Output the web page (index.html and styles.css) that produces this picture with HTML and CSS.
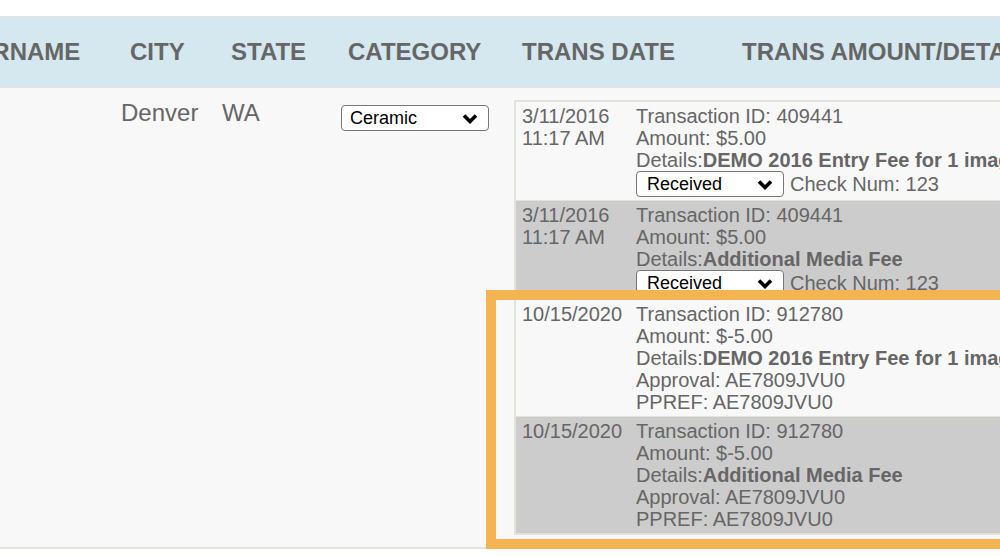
FILE: index.html
```html
<!DOCTYPE html>
<html lang="en">
<head>
  <meta charset="UTF-8">
  <meta name="viewport" content="width=device-width, initial-scale=1.0">
  <title>Entrants</title>
  <link rel="stylesheet" href="styles.css">
</head>
<body>
  <div class="grid">
    <div class="head">
      <div class="h-name">SURNAME</div>
      <div class="h-city">CITY</div>
      <div class="h-state">STATE</div>
      <div class="h-cat">CATEGORY</div>
      <div class="h-date">TRANS DATE</div>
      <div class="h-amount">TRANS AMOUNT/DETAILS</div>
    </div>

    <div class="row">
      <div class="c-name"></div>
      <div class="c-city">Denver</div>
      <div class="c-state">WA</div>
      <div class="c-cat">
        <span class="pick">
          <select>
            <option>Ceramic</option>
          </select>
          <svg class="chev" width="16" height="11" viewBox="0 0 16 11"><polyline points="2,2.5 8,8.5 14,2.5" fill="none" stroke="#000" stroke-width="3.6"/></svg>
        </span>
      </div>
      <div class="c-trans">
        <div class="trans">

          <div class="tr">
            <div class="t-date">3/11/2016<br>11:17 AM</div>
            <div class="t-info">
              Transaction ID: 409441<br>
              Amount: $5.00<br>
              Details:<b>DEMO 2016 Entry Fee for 1 image</b>
              <div class="status">
                <span class="pick small">
                  <select>
                    <option>Received</option>
                  </select>
                  <svg class="chev" width="16" height="11" viewBox="0 0 16 11"><polyline points="2,2.5 8,8.5 14,2.5" fill="none" stroke="#000" stroke-width="3.6"/></svg>
                </span>
                <span class="check">Check Num: 123</span>
              </div>
            </div>
          </div>

          <div class="tr alt">
            <div class="t-date">3/11/2016<br>11:17 AM</div>
            <div class="t-info">
              Transaction ID: 409441<br>
              Amount: $5.00<br>
              Details:<b>Additional Media Fee</b>
              <div class="status">
                <span class="pick small">
                  <select>
                    <option>Received</option>
                  </select>
                  <svg class="chev" width="16" height="11" viewBox="0 0 16 11"><polyline points="2,2.5 8,8.5 14,2.5" fill="none" stroke="#000" stroke-width="3.6"/></svg>
                </span>
                <span class="check">Check Num: 123</span>
              </div>
            </div>
          </div>

          <div class="tr">
            <div class="t-date">10/15/2020</div>
            <div class="t-info">
              Transaction ID: 912780<br>
              Amount: $-5.00<br>
              Details:<b>DEMO 2016 Entry Fee for 1 image</b><br>
              Approval: AE7809JVU0<br>
              PPREF: AE7809JVU0
            </div>
          </div>

          <div class="tr alt">
            <div class="t-date">10/15/2020</div>
            <div class="t-info">
              Transaction ID: 912780<br>
              Amount: $-5.00<br>
              Details:<b>Additional Media Fee</b><br>
              Approval: AE7809JVU0<br>
              PPREF: AE7809JVU0
            </div>
          </div>

        </div>
      </div>
    </div>
  </div>

  <div class="highlight"></div>
</body>
</html>
```

FILE: styles.css
```css
html, body {
  margin: 0;
  overflow: hidden;
  background: #fff;
}

body {
  font-family: 'Liberation Sans', Arial, sans-serif;
  color: #666;
  height: 556px;
  position: relative;
}

.grid {
  margin-left: -41px;
  width: 1400px;
  padding-top: 16px;
}

.head {
  display: flex;
  align-items: center;
  height: 70px;
  background: #d5e8ef;
  border-top: 1px solid #e3e3dc;
  border-bottom: 1px solid #e3e3dc;
  font-size: 24px;
  line-height: 28px;
  font-weight: bold;
}

.h-name { width: 171px; }
.h-city { width: 101px; }
.h-state { width: 117px; }
.h-cat { width: 174px; }
.h-date { width: 220px; }
.h-amount { flex: 1; white-space: nowrap; }

.row {
  display: flex;
  align-items: flex-start;
  background: #f8f8f8;
  padding: 11px 0 12px;
  border-bottom: 2px solid #e3e3dc;
  font-size: 24px;
  line-height: 28px;
}

.c-name { width: 162px; }
.c-city { width: 101px; }
.c-state { width: 119px; }
.c-cat { width: 173px; padding-top: 3px; }
.c-trans { flex: 1; padding-top: 1px; }

.pick {
  position: relative;
  display: inline-block;
  vertical-align: middle;
}

.pick select {
  appearance: none;
  -webkit-appearance: none;
  display: block;
  width: 148px;
  height: 26px;
  margin: 0;
  padding: 0 0 0 8px;
  border: 1px solid #767676;
  border-radius: 4px;
  background: #fff;
  color: #000;
  font-family: 'Liberation Sans', Arial, sans-serif;
  font-size: 18px;
}

.pick .chev {
  position: absolute;
  right: 11px;
  top: 8px;
  pointer-events: none;
}

.pick.small select {
  height: 26px;
  padding-left: 10px;
}

.trans {
  display: flex;
  flex-direction: column;
  gap: 1px;
  width: 800px;
  background: #e3e3dc;
  border: 2px solid #e3e3dc;
  font-size: 20px;
  line-height: 22px;
}

.tr {
  display: flex;
  background: #f8f8f8;
  padding: 3px 0;
}

.tr.alt {
  background: #cccccc;
}

.t-date {
  width: 114px;
  padding-left: 6px;
}

.t-info {
  flex: 1;
  white-space: nowrap;
}

.status {
  display: flex;
  align-items: center;
  height: 26px;
}

.check {
  margin-left: 6px;
}

.highlight {
  position: absolute;
  left: 486px;
  top: 290px;
  width: 600px;
  height: 259px;
  box-sizing: border-box;
  border: 10px solid #f5b454;
}
```
